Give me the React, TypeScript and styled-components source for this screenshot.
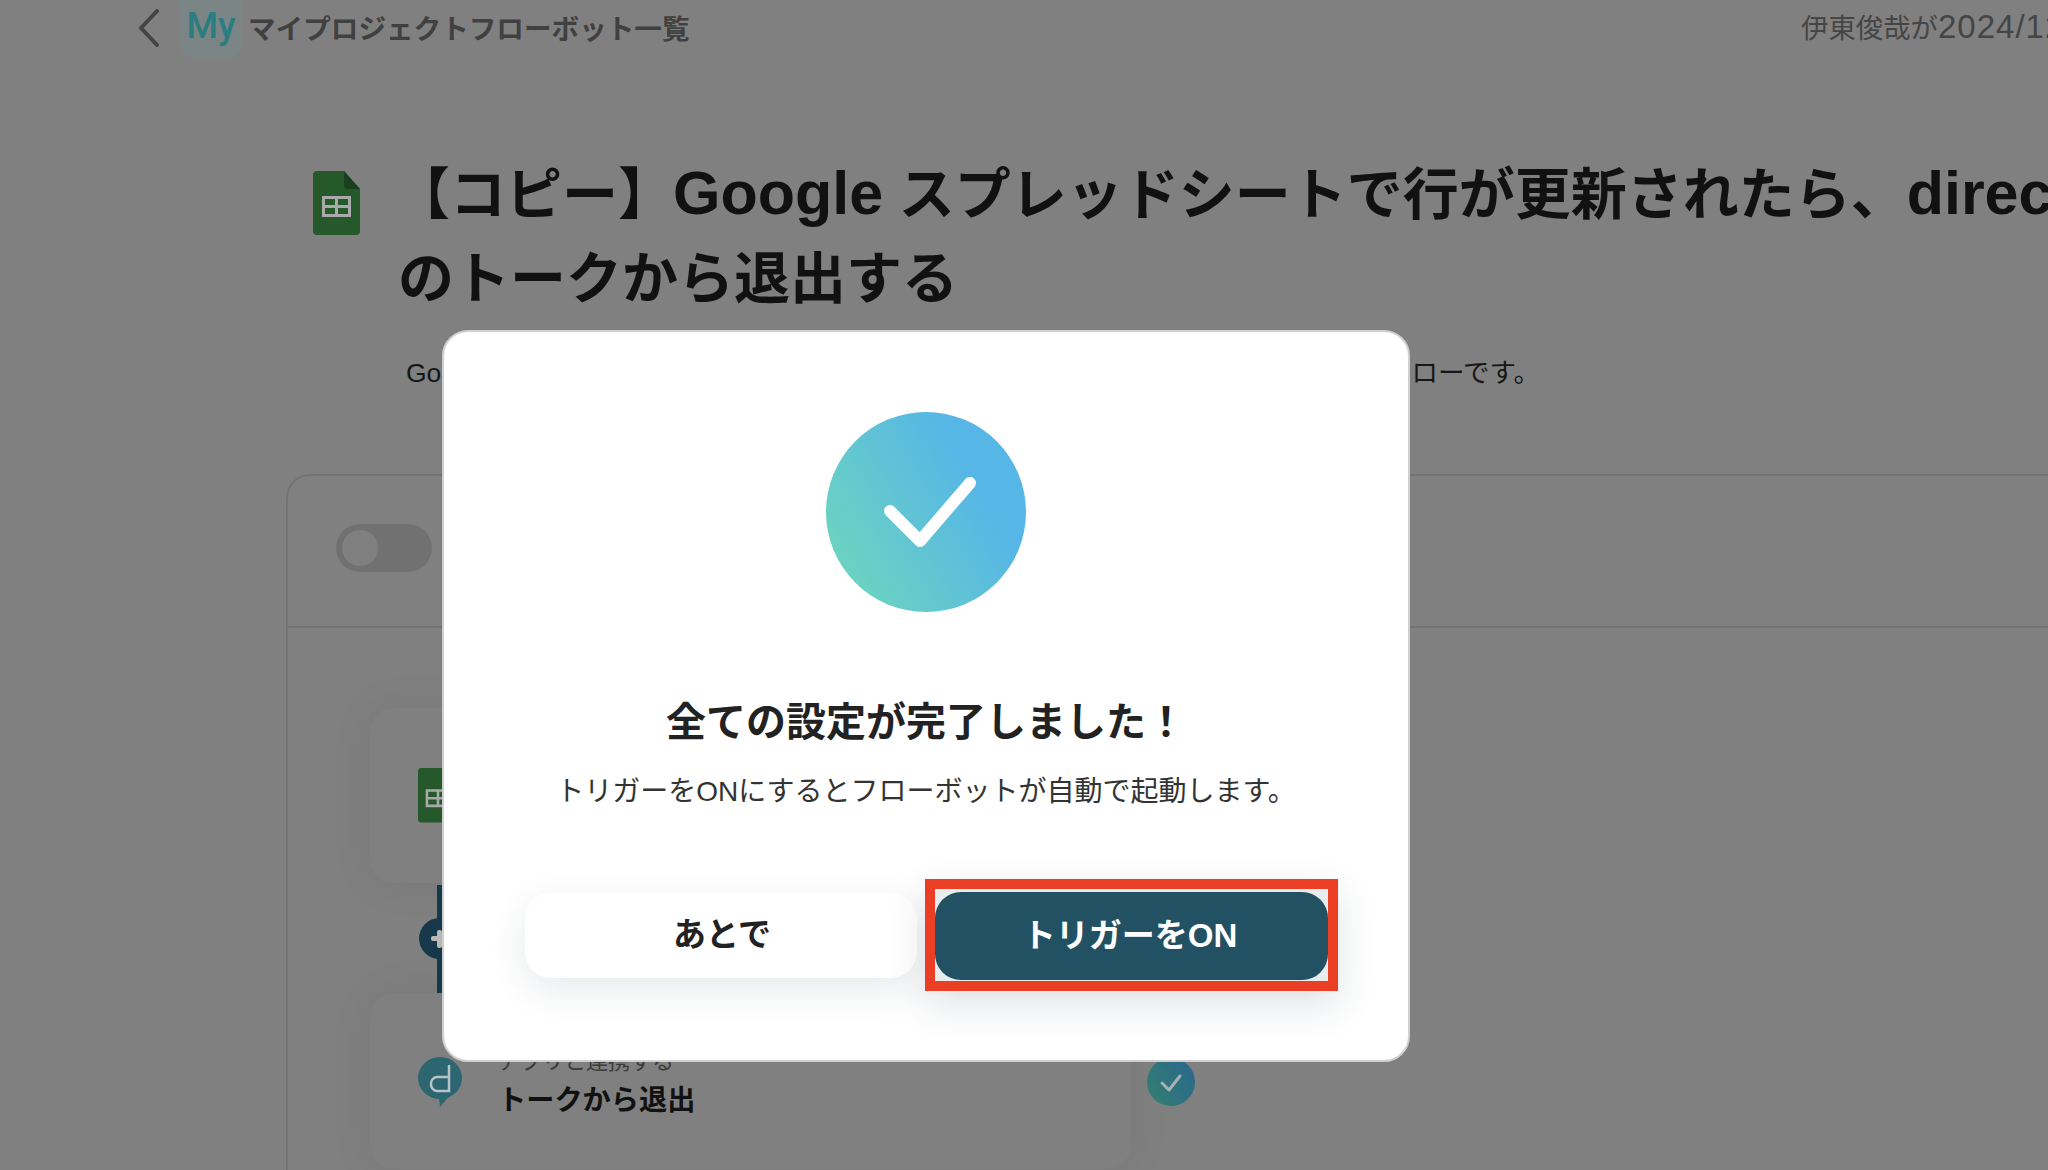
import React from 'react';
import styled, { createGlobalStyle } from 'styled-components';

const GlobalStyle = createGlobalStyle`
  html, body {
    margin: 0;
    width: 2048px;
    height: 1170px;
    overflow: hidden;
    background: #808080;
  }
  * {
    box-sizing: border-box;
  }
`;

const Page = styled.div`
  position: relative;
  width: 2048px;
  height: 1170px;
  overflow: hidden;
  background: #808080;
  color: #111;
  font-family: 'Liberation Sans', 'Noto Sans CJK JP', sans-serif;
`;

const TopBar = styled.header`
  display: flex;
  align-items: flex-start;
  height: 58px;
  padding-left: 138px;
`;

const BackIcon = styled.svg`
  width: 22px;
  height: 38px;
  margin-top: 9px;
  flex: none;
`;

const MyTile = styled.div`
  width: 62px;
  height: 59px;
  margin-left: 20px;
  padding-top: 6px;
  flex: none;
  text-align: center;
  border-radius: 0 0 16px 16px;
  background: #7b8586;
  font: 500 36px/40px Roboto, sans-serif;
  color: #2a7d80;
`;

const Crumb = styled.div`
  margin: 10px 0 0 6px;
  font-size: 27.6px;
  line-height: 40px;
  font-weight: 700;
  color: #404040;
  white-space: nowrap;
`;

const Edited = styled.div`
  margin: 9px 0 0 auto;
  width: 247px;
  font-size: 27.4px;
  line-height: 40px;
  color: #454545;
  white-space: nowrap;
`;

const EditedDigits = styled.span`
  font-size: 33px;
  line-height: 1;
  letter-spacing: 1px;
`;

const TitleRow = styled.div`
  display: flex;
  align-items: flex-start;
  gap: 38px;
  margin-top: 95px;
  padding-left: 313px;
`;

const SheetIcon = styled.svg<{ $size: number }>`
  width: ${(p) => p.$size}px;
  height: ${(p) => (p.$size * 64) / 47}px;
  flex: none;
`;

const TitleIconSlot = styled.div`
  margin-top: 18px;
  display: flex;
`;

const Title = styled.h1`
  margin: 0;
  font-size: 56px;
  line-height: 84px;
  font-weight: 700;
  color: #111;
  white-space: nowrap;
`;

const TitleLead = styled.span`
  margin: 0 -1px 0 -4px;
`;

const TitleLatin = styled.span`
  font-size: 61px;
  line-height: 1;
`;

const Description = styled.p`
  margin: 32px 0 0 406px;
  font-size: 26.5px;
  line-height: 40px;
  color: #161616;
  white-space: nowrap;
`;

const Panel = styled.section`
  width: 2000px;
  height: 900px;
  margin: 81px 0 0 286px;
  border: 2px solid #727272;
  border-radius: 24px;
`;

const PanelHeader = styled.div`
  display: flex;
  align-items: center;
  height: 152px;
  padding: 0 0 7px 48px;
  border-bottom: 2px solid #727272;
`;

const Toggle = styled.div`
  display: flex;
  align-items: center;
  width: 96px;
  height: 48px;
  padding-left: 6px;
  border-radius: 24px;
  background: #717171;
`;

const ToggleKnob = styled.div`
  width: 36px;
  height: 36px;
  border-radius: 50%;
  background: #808080;
`;

const Steps = styled.div`
  padding: 80px 0 0 82px;
`;

const StepRow = styled.div`
  display: flex;
  align-items: center;
  gap: 16px;
`;

const StepCard = styled.div`
  display: flex;
  align-items: center;
  gap: 36px;
  width: 761px;
  height: 175px;
  padding-left: 48px;
  border-radius: 24px;
  background: #808080;
  box-shadow: 0 0 44px rgba(0, 0, 0, 0.07);
`;

const StepText = styled.div`
  display: flex;
  flex-direction: column;
  padding-top: 1px;
`;

const StepLabel = styled.div`
  font-size: 22px;
  line-height: 36px;
  color: #3a3a3a;
`;

const StepName = styled.div`
  font-size: 28.2px;
  line-height: 40px;
  font-weight: 700;
  color: #111;
`;

const DoneBadge = styled.svg`
  width: 48px;
  height: 48px;
  flex: none;
`;

const Connector = styled.div`
  position: relative;
  display: flex;
  justify-content: center;
  width: 41px;
  height: 108px;
  margin: 2px 0 1px 49px;
`;

const ConnectorLine = styled.div`
  width: 5px;
  height: 100%;
  background: #17384a;
`;

const PlusBadge = styled.div`
  position: absolute;
  top: 33px;
  left: 0;
  width: 41px;
  height: 41px;
  border-radius: 50%;
  background: #17384a;

  &::before,
  &::after {
    content: '';
    position: absolute;
    background: #b8b8b8;
    border-radius: 2px;
  }
  &::before {
    left: 12px;
    top: 18px;
    width: 18px;
    height: 5px;
  }
  &::after {
    left: 18px;
    top: 12px;
    width: 5px;
    height: 18px;
  }
`;

const Modal = styled.div`
  position: absolute;
  left: 442px;
  top: 330px;
  display: flex;
  flex-direction: column;
  align-items: center;
  width: 968px;
  height: 732px;
  padding-top: 80px;
  border: 2px solid #cfcfcf;
  border-radius: 26px;
  background: #fff;
`;

const SuccessIcon = styled.div`
  position: relative;
  width: 200px;
  height: 200px;
  flex: none;
  border-radius: 50%;
  background: linear-gradient(60deg, #6dd4bf 10%, #56b6e6 72%);
  svg {
    display: block;
  }
`;

const ModalTitle = styled.h2`
  margin: 80px 0 0;
  font-size: 40px;
  line-height: 60px;
  font-weight: 700;
  color: #222;
`;

const ModalText = styled.p`
  margin: 19px 0 0;
  font-size: 28px;
  line-height: 42px;
  color: #333;
`;

const ButtonRow = styled.div`
  display: flex;
  align-items: center;
  gap: 8px;
  align-self: flex-start;
  margin: 66px 0 0 81px;
`;

const LaterButton = styled.button`
  width: 392px;
  height: 85px;
  padding: 0 0 6px 2px;
  border: none;
  border-radius: 26px;
  background: #fff;
  box-shadow: 0 12px 36px rgba(30, 50, 70, 0.1);
  font: 700 33px 'Liberation Sans', 'Noto Sans CJK JP', sans-serif;
  color: #222;
`;

const Highlight = styled.div`
  display: flex;
  width: 413px;
  height: 112px;
  padding-top: 3px;
  border: 10px solid #ea3f24;
  box-shadow: 0 14px 36px rgba(30, 50, 70, 0.14);
  background: #e8ecef;
`;

const StartButton = styled.button`
  width: 393px;
  height: 88px;
  padding: 0 3px 6px 0;
  border: none;
  border-radius: 26px;
  background: #225163;
  font: 700 33px 'Liberation Sans', 'Noto Sans CJK JP', sans-serif;
  color: #fff;
`;

function SheetGlyph({ size }: { size: number }) {
  return (
    <SheetIcon $size={size} viewBox="0 0 47 64">
      <path d="M4 0H31L47 18V60a4 4 0 0 1-4 4H4a4 4 0 0 1-4-4V4a4 4 0 0 1 4-4Z" fill="#25582a" />
      <path d="M31 0L47 18H35a4 4 0 0 1-4-4Z" fill="#1a3f1e" />
      <path d="M9 25H38V46H9Z M12 28V34H22V28Z M25 28V34H35V28Z M12 37V43H22V37Z M25 37V43H35V37Z" fill="#a9a9a9" fillRule="evenodd" />
    </SheetIcon>
  );
}

function App() {
  return (
    <Page>
      <GlobalStyle />
      <TopBar>
        <BackIcon viewBox="0 0 22 38" fill="none">
          <path d="M19 2L3 19L19 36" stroke="#444" strokeWidth="4" strokeLinecap="round" strokeLinejoin="round" />
        </BackIcon>
        <MyTile>My</MyTile>
        <Crumb>マイプロジェクトフローボット一覧</Crumb>
        <Edited>
          伊東俊哉が<EditedDigits>2024/12/1</EditedDigits>
        </Edited>
      </TopBar>

      <TitleRow>
        <TitleIconSlot>
          <SheetGlyph size={47} />
        </TitleIconSlot>
        <Title>
          <TitleLead>【コピー】</TitleLead>
          <TitleLatin>Google</TitleLatin> スプレッドシートで行が更新されたら、<TitleLatin>direct</TitleLatin>
          <br />
          のトークから退出する
        </Title>
      </TitleRow>

      <Description>Google スプレッドシートで行が更新されたら、directのトークから自動で退出するフローです。</Description>

      <Panel>
        <PanelHeader>
          <Toggle>
            <ToggleKnob />
          </Toggle>
        </PanelHeader>
        <Steps>
          <StepRow>
            <StepCard>
              <SheetGlyph size={40} />
            </StepCard>
          </StepRow>
          <Connector>
            <ConnectorLine />
            <PlusBadge />
          </Connector>
          <StepRow>
            <StepCard>
              <svg width="44" height="50" viewBox="0 0 44 50" style={{ flex: 'none' }}>
                <ellipse cx="22" cy="21" rx="22" ry="21" fill="#2c6671" />
                <path d="M21 40L22 50L33 37Z" fill="#2c6671" />
                <path d="M31 8V34H19a6.500 6.500 0 0 1-6-7V27a6.500 6.500 0 0 1 6-7H31" fill="none" stroke="#b5c4c6" strokeWidth="2.500" />
              </svg>
              <StepText>
                <StepLabel>アプリと連携する</StepLabel>
                <StepName>トークから退出</StepName>
              </StepText>
            </StepCard>
            <DoneBadge viewBox="0 0 48 48">
              <defs>
                <linearGradient id="doneFill" x1="0" y1="1" x2="1" y2="0.4">
                  <stop offset="0" stopColor="#33806f" />
                  <stop offset="1" stopColor="#2b6a8a" />
                </linearGradient>
              </defs>
              <circle cx="24" cy="24" r="24" fill="url(#doneFill)" />
              <path d="M15 25L22 32L33 18" fill="none" stroke="#a8b2b2" strokeWidth="3" strokeLinecap="round" strokeLinejoin="round" />
            </DoneBadge>
          </StepRow>
        </Steps>
      </Panel>

      <Modal>
        <SuccessIcon>
          <svg width="200" height="200" viewBox="0 0 200 200" fill="none">
            <path d="M64 99L94 129L144 71" stroke="#fff" strokeWidth="12" strokeLinecap="round" strokeLinejoin="round" />
          </svg>
        </SuccessIcon>
        <ModalTitle>全ての設定が完了しました！</ModalTitle>
        <ModalText>トリガーをONにするとフローボットが自動で起動します。</ModalText>
        <ButtonRow>
          <LaterButton>あとで</LaterButton>
          <Highlight>
            <StartButton>トリガーをON</StartButton>
          </Highlight>
        </ButtonRow>
      </Modal>
    </Page>
  );
}

export default App;
